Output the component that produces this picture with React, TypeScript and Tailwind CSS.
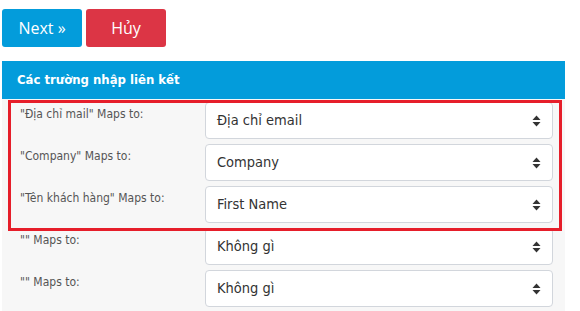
const ROWS = [
  { label: '"Địa chỉ mail" Maps to:', value: "Địa chỉ email" },
  { label: '"Company" Maps to:', value: "Company" },
  { label: '"Tên khách hàng" Maps to:', value: "First Name" },
  { label: '"" Maps to:', value: "Không gì" },
  { label: '"" Maps to:', value: "Không gì" },
];

function SortIcon() {
  return (
    <svg width="9" height="12" viewBox="0 0 9 12" className="shrink-0 text-[#333]">
      <path d="M4.5 0.5 L8.5 5 H0.5 Z" fill="currentColor" />
      <path d="M4.5 11.5 L8.5 7 H0.5 Z" fill="currentColor" />
    </svg>
  );
}

function MapRow({ label, value }: { label: string; value: string }) {
  return (
    <div className="flex items-start">
      <div className="w-[185px] shrink-0 pt-[3px] text-[12px] text-[#555]">{label}</div>
      <div className="flex h-[37px] flex-1 items-center justify-between rounded-[4px] border border-[#d2d6dc] bg-white pl-[11px] pr-[11px] text-[14.5px] text-[#333]">
        <span>{value}</span>
        <SortIcon />
      </div>
    </div>
  );
}

export default function App() {
  return (
    <div className="h-[311px] w-[580px] overflow-hidden bg-white font-['DejaVu_Sans_Condensed','Liberation_Sans',sans-serif]">
      <div className="flex gap-1 pl-[2px] pt-[9px] font-['Open_Sans',sans-serif]">
        <button className="h-[38px] w-[80px] rounded-[3px] bg-[#039cdb] text-[16px] text-white">Next »</button>
        <button className="h-[38px] w-[80px] rounded-[3px] bg-[#dc3545] text-[16px] text-white">Hủy</button>
      </div>

      <div className="relative ml-[2px] mt-[14px] w-[563px] bg-[#f7f7f7]">
        <div className="flex h-[38px] items-center bg-[#039cdb] pl-[15px] text-[13px] font-bold text-white">
          Các trường nhập liên kết
        </div>
        <div className="flex flex-col gap-[5px] pl-[18px] pr-[12px] pt-[3px] pb-[6px]">
          {ROWS.map((r, i) => (
            <MapRow key={i} label={r.label} value={r.value} />
          ))}
        </div>
        <div className="pointer-events-none absolute left-[6px] top-[39px] h-[131px] w-[554px] border-[3px] border-[#e61e2a]" />
      </div>
    </div>
  );
}
